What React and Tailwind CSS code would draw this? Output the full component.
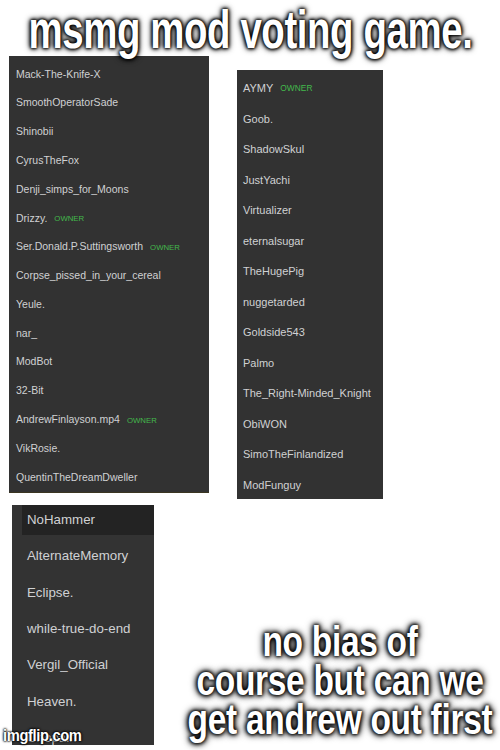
import React from 'react';

const leftMembers = [
  { name: 'Mack-The-Knife-X' },
  { name: 'SmoothOperatorSade' },
  { name: 'Shinobii' },
  { name: 'CyrusTheFox' },
  { name: 'Denji_simps_for_Moons' },
  { name: 'Drizzy.', owner: true },
  { name: 'Ser.Donald.P.Suttingsworth', owner: true },
  { name: 'Corpse_pissed_in_your_cereal' },
  { name: 'Yeule.' },
  { name: 'nar_' },
  { name: 'ModBot' },
  { name: '32-Bit' },
  { name: 'AndrewFinlayson.mp4', owner: true },
  { name: 'VikRosie.' },
  { name: 'QuentinTheDreamDweller' },
];

const midMembers = [
  { name: 'AYMY', owner: true },
  { name: 'Goob.' },
  { name: 'ShadowSkul' },
  { name: 'JustYachi' },
  { name: 'Virtualizer' },
  { name: 'eternalsugar' },
  { name: 'TheHugePig' },
  { name: 'nuggetarded' },
  { name: 'Goldside543' },
  { name: 'Palmo' },
  { name: 'The_Right-Minded_Knight' },
  { name: 'ObiWON' },
  { name: 'SimoTheFinlandized' },
  { name: 'ModFunguy' },
];

const bottomMembers = [
  'NoHammer',
  'AlternateMemory',
  'Eclipse.',
  'while-true-do-end',
  'Vergil_Official',
  'Heaven.',
  'Chopain',
];

// impact-ish caption look: squeezed bold sans with a black glow
const memeText =
  "text-white font-bold whitespace-nowrap [font-family:'Liberation_Sans',Arial,sans-serif] [text-shadow:0_0_3px_#000,0_0_4px_#000,0_0_6px_#000,0_0_8px_#000]";

const App = () => {
  return (
    <div className="relative w-[500px] h-[750px] bg-white overflow-hidden [font-family:'Liberation_Sans',Arial,sans-serif]">
      {/* Title */}
      <div className="h-[56px] flex items-center justify-center">
        <h1 className={`${memeText} inline-block text-[48px] leading-none scale-x-[0.8] scale-y-[1.12] tracking-[-0.5px] mt-[4px]`}>
          msmg mod voting game.
        </h1>
      </div>

      {/* Top lists */}
      <div className="flex items-start">
        <div className="ml-[9px] w-[200px] h-[437px] bg-[#323232] pt-[4px] border-b border-[#3b3622]">
          {leftMembers.map((m) => (
            <div key={m.name} className="h-[28.8px] flex items-center pl-[7px] gap-[7px]">
              <span className="text-[10.5px] text-[#d0d1d3]">{m.name}</span>
              {m.owner && <span className="text-[7.8px] text-[#43b94c] mt-[1px]">OWNER</span>}
            </div>
          ))}
        </div>

        <div className="ml-[28px] mt-[14px] w-[146px] h-[429px] bg-[#323232] pt-[3px]">
          {midMembers.map((m) => (
            <div key={m.name} className="h-[30.5px] flex items-center pl-[6px] gap-[7px]">
              <span className="text-[11px] text-[#d0d1d3]">{m.name}</span>
              {m.owner && <span className="text-[8.4px] text-[#43b94c] mt-[1px]">OWNER</span>}
            </div>
          ))}
        </div>
      </div>

      {/* Bottom row */}
      <div className="flex mt-[6px] h-[245px]">
        <div className="ml-[12px] w-[142px] h-[240px] bg-[#333333] pl-[10px] overflow-hidden">
          {bottomMembers.map((name, i) => (
            <div key={name} className="h-[36.3px]">
              <div className={`h-[30px] flex items-center pl-[5px] ${i === 0 ? 'bg-[#232323]' : ''}`}>
                <span className="text-[13.3px] text-[#d0d1d3]">{name}</span>
              </div>
            </div>
          ))}
        </div>

        <div className="ml-auto w-[320px] self-end pb-[23px] flex justify-center">
          <p className={`${memeText} inline-block text-center text-[33.5px] leading-[31px] scale-y-[1.27] tracking-[-0.3px]`}>
            no bias of
            <br />
            course but can we
            <br />
            get andrew out first
          </p>
        </div>
      </div>

      {/* Watermark */}
      <div className="absolute left-[3px] bottom-[2px]">
        <span className="inline-block text-white font-bold text-[16px] leading-none scale-x-[0.92] origin-left tracking-[-0.4px] [text-shadow:0_0_2px_#000,0_0_2px_#000,0_0_3px_#000]">
          imgflip.com
        </span>
      </div>
    </div>
  );
};

export default App;
